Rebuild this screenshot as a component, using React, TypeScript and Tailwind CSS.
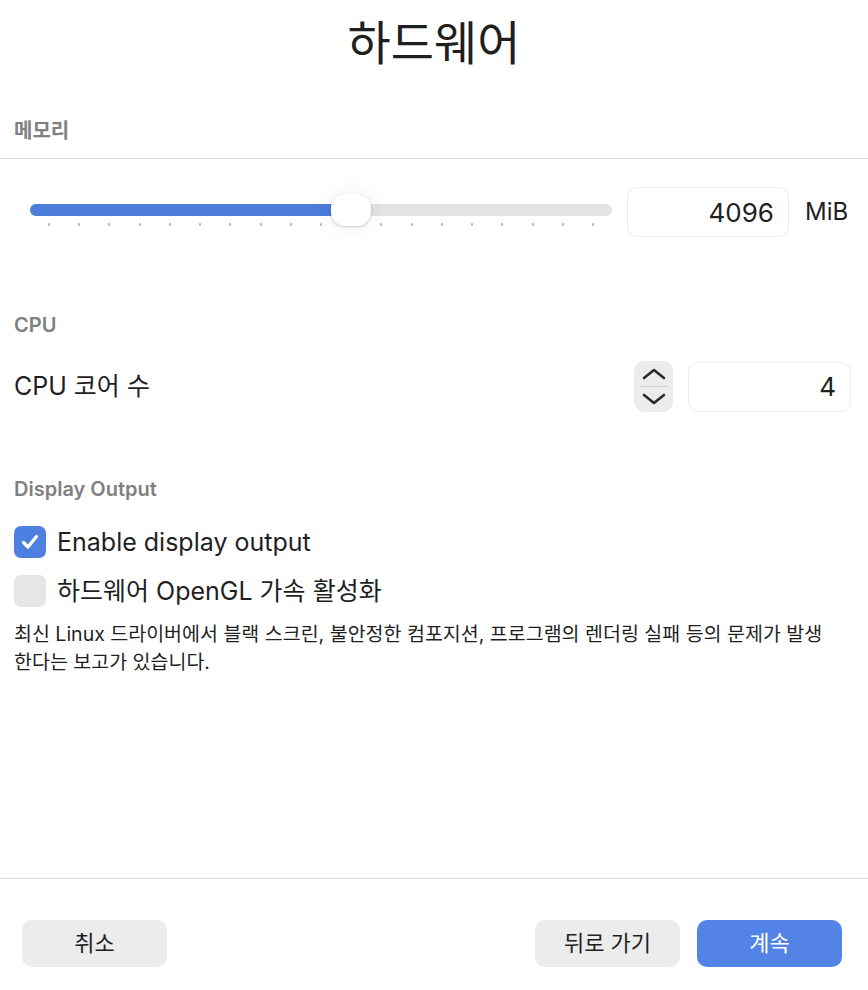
import React from "react";

const dots = Array.from({ length: 19 }, (_, i) => i);

function SectionTitle({ children, className = "" }: { children: React.ReactNode; className?: string }) {
  return (
    <div className={`px-[14px] text-[20px] leading-[28px] font-semibold text-[#808080] ${className}`}>
      {children}
    </div>
  );
}

function MemorySlider() {
  // thumb sits at tick 10 of 19
  return (
    <div className="relative w-[582px] h-[50px]">
      <div className="absolute left-0 right-0 top-[17px] h-[12px] rounded-full bg-[#e3e3e3]">
        <div className="h-full w-[321px] rounded-full bg-[#4c7ddb]" />
      </div>
      <div className="absolute left-[18px] right-[18px] top-[36px] flex justify-between">
        {dots.map((d) => (
          <span key={d} className="w-[2px] h-[3px] rounded-full bg-[#b5b5b5]" />
        ))}
      </div>
      <div className="absolute left-[301px] top-[7px] w-[40px] h-[32px] rounded-[14px] bg-white shadow-[0_0_22px_rgba(0,0,0,0.07),0_1px_3px_rgba(0,0,0,0.18)]" />
    </div>
  );
}

function Checkbox({ checked }: { checked: boolean }) {
  return (
    <div
      className={`w-[32px] h-[32px] rounded-[7px] flex items-center justify-center ${
        checked ? "bg-[#4e80e1]" : "bg-[#e6e6e6]"
      }`}
    >
      {checked && (
        <svg width="22" height="22" viewBox="0 0 22 22" fill="none">
          <path d="M4.5 11.5 L9 16 L17.5 5.5" stroke="white" strokeWidth="3.2" strokeLinecap="round" strokeLinejoin="round" />
        </svg>
      )}
    </div>
  );
}

export default function App() {
  return (
    <div className="w-[868px] h-[990px] bg-white flex flex-col text-[#1f1f1f] font-['Inter','Noto_Sans_CJK_KR',sans-serif]">
      {/* Title */}
      <div className="h-[84px] flex items-center justify-center">
        <h1 className="text-[47px] leading-none font-normal text-[#1f1f1f]">하드웨어</h1>
      </div>

      {/* Memory */}
      <div className="h-[75px] flex items-end pb-[13px] border-b border-[#d9d9d9]">
        <SectionTitle>메모리</SectionTitle>
      </div>
      <div className="mt-[28px] flex items-center pl-[30px]">
        <MemorySlider />
        <div className="ml-[15px] w-[162px] h-[50px] rounded-[10px] border border-[#ececec] flex items-center justify-end pr-[14px] text-[26px]">
          4096
        </div>
        <span className="ml-[16px] text-[24px]">MiB</span>
      </div>

      {/* CPU */}
      <SectionTitle className="mt-[74px]">CPU</SectionTitle>
      <div className="mt-[22px] h-[51px] flex items-center pl-[14px] pr-[17px]">
        <span className="text-[25px] flex-1">CPU 코어 수</span>
        <div className="w-[39px] h-[51px] rounded-[10px] bg-[#ececec] flex flex-col items-center justify-center">
          <svg width="24" height="12" viewBox="0 0 24 12" fill="none">
            <path d="M2 10 L12 2 L22 10" stroke="#2a2a2a" strokeWidth="2.6" strokeLinecap="round" strokeLinejoin="round" />
          </svg>
          <div className="w-[28px] h-[1px] bg-[#cfcfcf] my-[6px]" />
          <svg width="24" height="12" viewBox="0 0 24 12" fill="none">
            <path d="M2 2 L12 10 L22 2" stroke="#2a2a2a" strokeWidth="2.6" strokeLinecap="round" strokeLinejoin="round" />
          </svg>
        </div>
        <div className="ml-[15px] w-[163px] h-[50px] rounded-[10px] border border-[#ececec] flex items-center justify-end pr-[14px] text-[26px]">
          4
        </div>
      </div>

      {/* Display Output */}
      <SectionTitle className="mt-[63px]">Display Output</SectionTitle>
      <div className="mt-[23px] px-[14px] flex flex-col gap-[17px]">
        <label className="flex items-center gap-[11px] h-[32px]">
          <Checkbox checked />
          <span className="text-[25px] leading-[32px]">Enable display output</span>
        </label>
        <label className="flex items-center gap-[11px] h-[32px]">
          <Checkbox checked={false} />
          <span className="text-[25px] leading-[32px]">하드웨어 OpenGL 가속 활성화</span>
        </label>
      </div>
      <p className="mt-[13px] px-[14px] text-[19.5px] leading-[28px]">
        최신 Linux 드라이버에서 블랙 스크린, 불안정한 컴포지션, 프로그램의 렌더링 실패 등의 문제가 발생
        <br />
        한다는 보고가 있습니다.
      </p>

      <div className="flex-1" />

      {/* Footer */}
      <div className="border-t border-[#dedede] pt-[41px] pb-[23px] pl-[22px] pr-[26px] flex items-center">
        <button className="w-[145px] h-[47px] rounded-[10px] bg-[#ececec] text-[22px]">취소</button>
        <div className="flex-1" />
        <button className="w-[145px] h-[47px] rounded-[10px] bg-[#ececec] text-[22px]">뒤로 가기</button>
        <button className="ml-[17px] w-[145px] h-[47px] rounded-[10px] bg-[#5383e6] text-white text-[22px]">계속</button>
      </div>
    </div>
  );
}
